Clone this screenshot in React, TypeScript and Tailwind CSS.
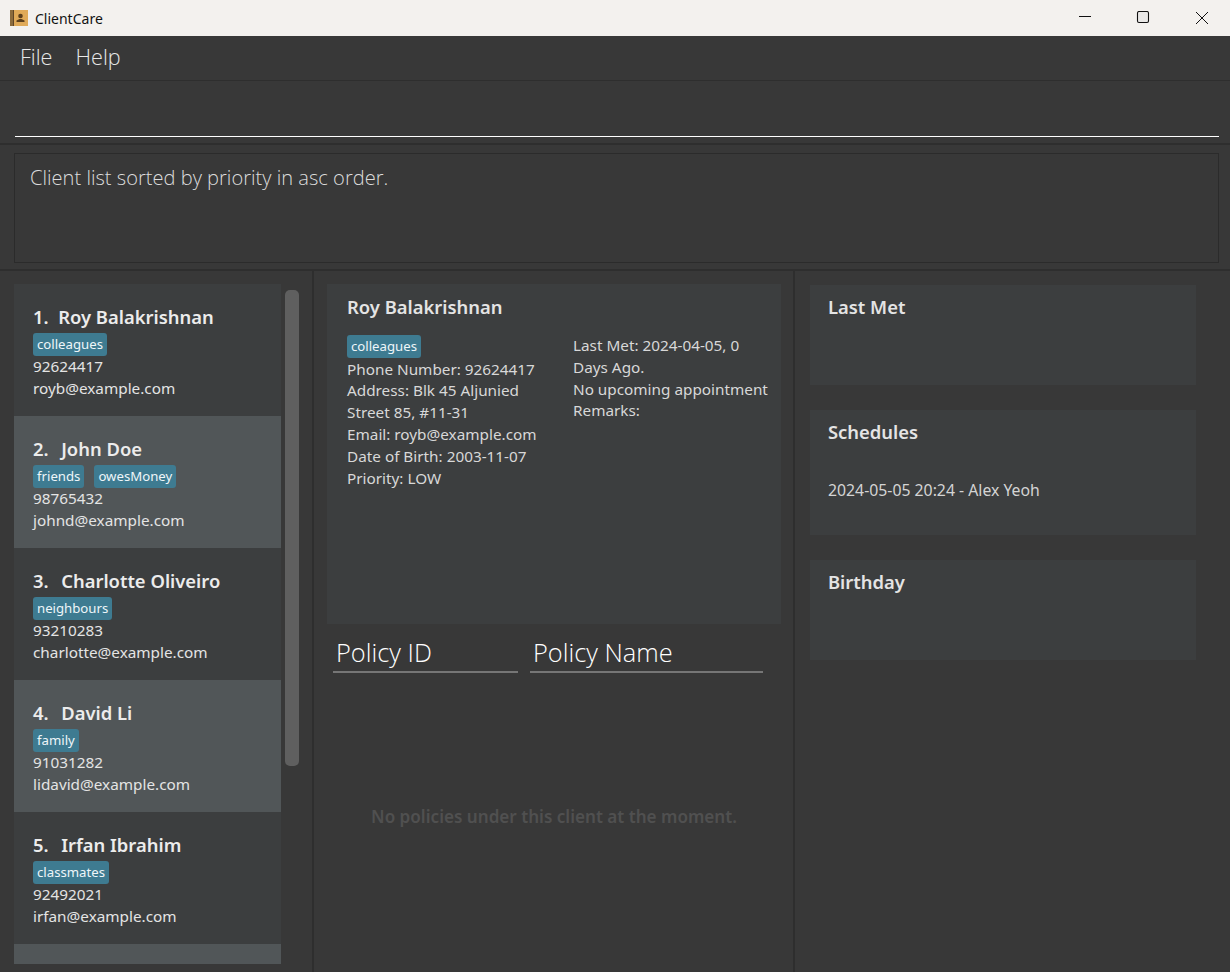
import React from 'react';

const clients = [
  { name: 'Roy Balakrishnan', tags: ['colleagues'], phone: '92624417', email: 'royb@example.com' },
  { name: 'John Doe', tags: ['friends', 'owesMoney'], phone: '98765432', email: 'johnd@example.com' },
  { name: 'Charlotte Oliveiro', tags: ['neighbours'], phone: '93210283', email: 'charlotte@example.com' },
  { name: 'David Li', tags: ['family'], phone: '91031282', email: 'lidavid@example.com' },
  { name: 'Irfan Ibrahim', tags: ['classmates'], phone: '92492021', email: 'irfan@example.com' },
];

function Tag({ label }: { label: string }) {
  return (
    <span className="h-[23px] px-[4px] rounded-[3px] bg-[#3e7b91] text-[#eef6f9] text-[13.2px] leading-[22px]">
      {label}
    </span>
  );
}

function ClientCard({ index, client }: { index: number; client: (typeof clients)[number] }) {
  return (
    <div className={`h-[132px] shrink-0 pl-[19px] pt-[20px] ${index % 2 === 0 ? 'bg-[#3c3e3f]' : 'bg-[#515658]'}`}>
      <div className="h-[26px] text-[18.4px] leading-[26px] font-semibold text-[#ececec] whitespace-pre">
        {index + 1}.  <span className={index === 0 ? 'ml-0' : 'ml-[3px]'}>{client.name}</span>
      </div>
      <div className="flex gap-[10px] h-[22px] mt-[3px]">
        {client.tags.map(t => <Tag key={t} label={t} />)}
      </div>
      <div className="text-[15.3px] leading-[22px] text-[#e4e4e4]">{client.phone}</div>
      <div className="text-[15.3px] leading-[22px] text-[#e4e4e4]">{client.email}</div>
    </div>
  );
}

function SideCard({ title, className, children }: { title: string; className: string; children?: React.ReactNode }) {
  return (
    <div className={`w-[386px] bg-[#3c3e3f] pl-[18px] pt-[9px] ${className}`}>
      <div className="text-[18.4px] leading-[26px] font-semibold text-[#e4e4e4]">{title}</div>
      {children}
    </div>
  );
}

export default function App() {
  return (
    <div className="w-[1230px] h-[972px] overflow-hidden flex flex-col bg-[#383838] font-['Noto_Sans',sans-serif]">
      {/* window title bar */}
      <div className="h-[36px] shrink-0 bg-[#f3f1ee] flex items-center">
        <svg width="18" height="18" viewBox="0 0 18 18" className="ml-[10px]">
          <rect x="0" y="1" width="18" height="16" fill="#8a6a3c" />
          <rect x="3" y="1" width="15" height="16" fill="#e0aa58" />
          <rect x="3" y="1" width="1" height="16" fill="#5e4526" />
          <circle cx="10.5" cy="7" r="2.3" fill="#5b3f1c" />
          <path d="M6.5 13v-1.5l3-1.5h2l3 1.5V13z" fill="#5b3f1c" />
        </svg>
        <span className="ml-[7px] text-[14px] text-[#111]">ClientCare</span>
        <div className="ml-auto flex items-center">
          <svg width="14" height="14" viewBox="0 0 14 14" className="mr-[45px]">
            <path d="M2 5.5h12" stroke="#111" strokeWidth="1" />
          </svg>
          <svg width="14" height="14" viewBox="0 0 14 14" className="mr-[45px]">
            <rect x="1.5" y="0.5" width="11" height="11" rx="1.5" fill="#e9e8e6" stroke="#111" strokeWidth="1.1" />
          </svg>
          <svg width="14" height="14" viewBox="0 0 14 14" className="mr-[21px]">
            <path d="M1 1l12 12M13 1L1 13" stroke="#111" strokeWidth="1" />
          </svg>
        </div>
      </div>

      {/* menu bar */}
      <div className="h-[44px] shrink-0 flex items-center pl-[20px] gap-[23px] text-[21.6px] font-light text-[#e8e8e8] border-b border-[#2e2e2e] box-content font-['Open_Sans',sans-serif]">
        <span className="-mt-[1px]">File</span>
        <span className="-mt-[1px]">Help</span>
      </div>

      {/* command box */}
      <div className="h-[64px] shrink-0 pl-[15px] pr-[11px] border-b-2 border-[#2e2e2e] flex items-end pb-[6px]">
        <div className="h-[1px] w-full bg-white" />
      </div>

      {/* result display */}
      <div className="h-[126px] shrink-0 pt-[8px] pl-[14px] pr-[11px] border-b-2 border-[#2e2e2e]">
        <div className="h-[110px] border border-[#2b2b2b] pl-[15px] pt-[8px] text-[20.1px] leading-[32px] font-light text-[#dcdcdc] font-['Open_Sans',sans-serif]">
          Client list sorted by priority in asc order.
        </div>
      </div>

      <div className="flex-1 min-h-0 flex">
        {/* client list */}
        <div className="w-[314px] shrink-0 border-r-2 border-[#2e2e2e] pl-[14px] pt-[13px] pb-[8px] flex">
          <div className="w-[267px] flex flex-col overflow-hidden">
            {clients.map((c, i) => <ClientCard key={c.name} index={i} client={c} />)}
            <div className="h-[20px] shrink-0 bg-[#515658]" />
          </div>
          <div className="w-[14px] h-[476px] ml-[4px] mt-[6px] rounded-[5px] bg-[#5f5f5f]" />
        </div>

        {/* client details and policies */}
        <div className="w-[481px] shrink-0 border-r-2 border-[#2e2e2e] flex flex-col pl-[13px] pt-[13px]">
          <div className="w-[454px] h-[340px] bg-[#3c3e3f] pl-[20px] pt-[10px]">
            <div className="text-[18.4px] leading-[26px] font-semibold text-[#e4e4e4]">Roy Balakrishnan</div>
            <div className="flex mt-[15px] text-[15.3px] leading-[21.8px] text-[#d8d8d8]">
              <div className="w-[226px] pr-[20px]">
                <div className="h-[23.6px] flex"><Tag label="colleagues" /></div>
                <div>Phone Number: 92624417</div>
                <div>Address: Blk 45 Aljunied Street 85, #11-31</div>
                <div>Email: royb@example.com</div>
                <div>Date of Birth: 2003-11-07</div>
                <div>Priority: LOW</div>
              </div>
              <div className="w-[200px]">
                <div>Last Met: 2024-04-05, 0 Days Ago.</div>
                <div>No upcoming appointment</div>
                <div>Remarks:</div>
              </div>
            </div>
          </div>
          <div className="flex mt-[9px] ml-[6px] gap-[12px] text-[25.4px] leading-[38px] font-light text-white font-['Open_Sans',sans-serif]">
            <div className="w-[185px] pl-[3px] border-b-2 border-[#767676]">Policy ID</div>
            <div className="w-[233px] pl-[3px] border-b-2 border-[#767676]">Policy Name</div>
          </div>
          <div className="w-[454px] mt-[132px] text-center text-[17.1px] leading-[24px] font-semibold text-[#505050]">
            No policies under this client at the moment.
          </div>
        </div>

        {/* side cards */}
        <div className="flex-1 flex flex-col pl-[15px] pt-[14px]">
          <SideCard title="Last Met" className="h-[100px]" />
          <SideCard title="Schedules" className="h-[125px] mt-[25px]">
            <div className="mt-[34px] text-[15.8px] leading-[22px] text-[#d4d4d4]">2024-05-05 20:24 - Alex Yeoh</div>
          </SideCard>
          <SideCard title="Birthday" className="h-[100px] mt-[25px]" />
        </div>
      </div>
    </div>
  );
}
